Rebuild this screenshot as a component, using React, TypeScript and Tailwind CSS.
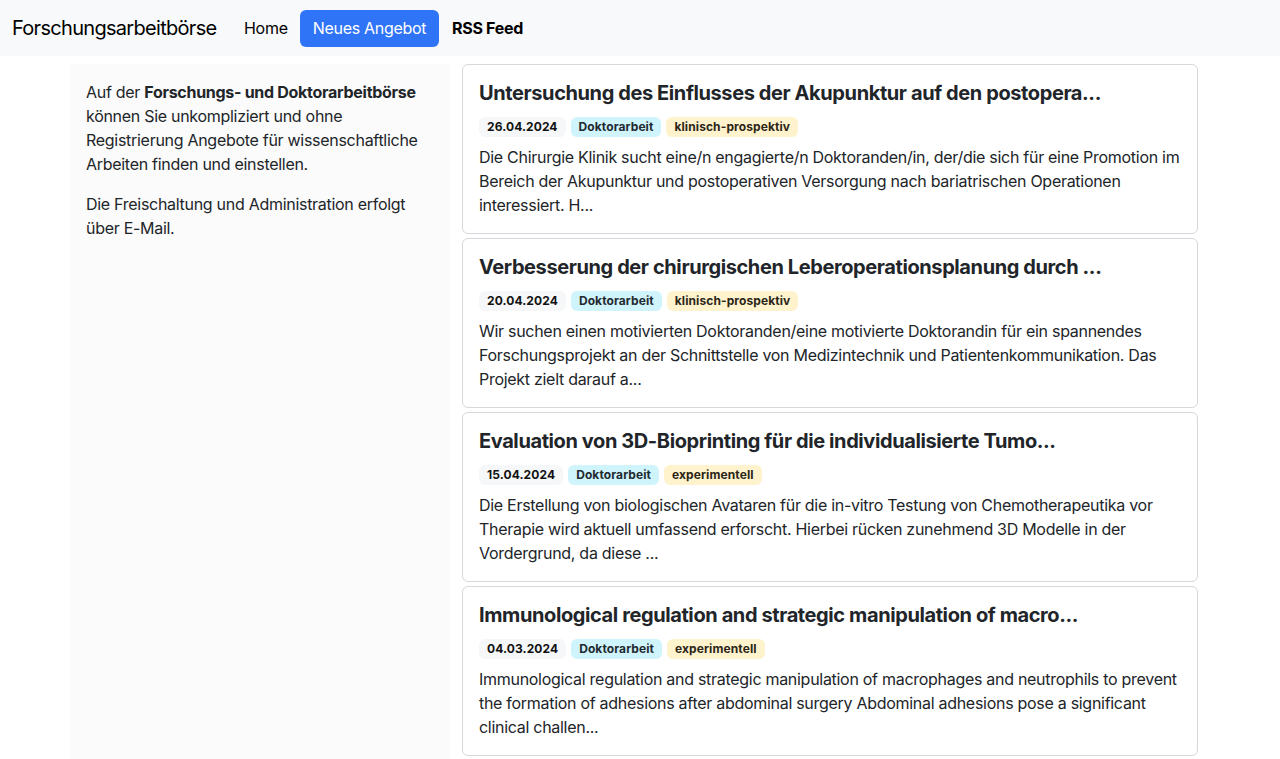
import React from "react";

type Offer = {
  title: string;
  date: string;
  kind: string;
  method: string;
  text: string;
};

const offers: Offer[] = [
  {
    title: "Untersuchung des Einflusses der Akupunktur auf den postopera...",
    date: "26.04.2024",
    kind: "Doktorarbeit",
    method: "klinisch-prospektiv",
    text: "Die Chirurgie Klinik sucht eine/n engagierte/n Doktoranden/in, der/die sich für eine Promotion im Bereich der Akupunktur und postoperativen Versorgung nach bariatrischen Operationen interessiert. H...",
  },
  {
    title: "Verbesserung der chirurgischen Leberoperationsplanung durch ...",
    date: "20.04.2024",
    kind: "Doktorarbeit",
    method: "klinisch-prospektiv",
    text: "Wir suchen einen motivierten Doktoranden/eine motivierte Doktorandin für ein spannendes Forschungsprojekt an der Schnittstelle von Medizintechnik und Patientenkommunikation. Das Projekt zielt darauf a...",
  },
  {
    title: "Evaluation von 3D-Bioprinting für die individualisierte Tumo...",
    date: "15.04.2024",
    kind: "Doktorarbeit",
    method: "experimentell",
    text: "Die Erstellung von biologischen Avataren für die in-vitro Testung von Chemotherapeutika vor Therapie wird aktuell umfassend erforscht. Hierbei rücken zunehmend 3D Modelle in der Vordergrund, da diese ...",
  },
  {
    title: "Immunological regulation and strategic manipulation of macro...",
    date: "04.03.2024",
    kind: "Doktorarbeit",
    method: "experimentell",
    text: "Immunological regulation and strategic manipulation of macrophages and neutrophils to prevent the formation of adhesions after abdominal surgery Abdominal adhesions pose a significant clinical challen...",
  },
];

function Badge({ className, children }: { className: string; children: React.ReactNode }) {
  return (
    <span
      className={
        "inline-block rounded-md px-[8px] py-[4px] text-[12px] font-bold leading-none tracking-[0.008em] " +
        className
      }
    >
      {children}
    </span>
  );
}

function OfferCard({ offer }: { offer: Offer }) {
  return (
    <div className="bg-white border border-[#d6d8db] rounded-md p-4 mb-1">
      <h5 className="text-[20px] leading-[24px] font-bold tracking-[-0.02em] text-[#212529] mb-2">
        {offer.title}
      </h5>
      <div className="flex gap-[5px] mt-[12px] mb-2">
        <Badge className="bg-[#f6f7f8] text-[#111]">{offer.date}</Badge>
        <Badge className="bg-[#cff4fc] text-[#1f2a30]">{offer.kind}</Badge>
        <Badge className="bg-[#fff3cd] text-[#2b2618]">{offer.method}</Badge>
      </div>
      <p className="text-[16px] leading-[24px] text-[#212529]">{offer.text}</p>
    </div>
  );
}

export default function App() {
  return (
    <div
      className="min-h-screen bg-white flex flex-col text-[#212529] tracking-[-0.018em]"
      style={{ fontFamily: "Inter, 'Noto Sans', sans-serif" }}
    >
      <nav className="h-[56px] bg-[#f8f9fa] flex items-center px-3 shrink-0">
        <span className="w-[203px] text-[20px] text-black tracking-[-0.035em] whitespace-nowrap mr-[21px]">
          Forschungsarbeitbörse
        </span>
        <a className="w-[59px] text-[16px] text-black px-2 py-2 mr-[5px]">Home</a>
        <a className="w-[139px] text-[16px] text-white bg-[#2f74f6] rounded-md h-[37px] flex items-center justify-center">
          Neues Angebot
        </a>
        <a className="text-[16px] font-bold text-black ml-[13px]">RSS Feed</a>
      </nav>

      <main className="flex-1 w-[1140px] mx-auto flex pt-2">
        <aside className="w-[380px] bg-[#fbfbfb] px-4 py-4 text-[16px] leading-[24px]">
          <p className="mb-4">
            Auf der <b>Forschungs- und Doktorarbeitbörse</b> können Sie unkompliziert und ohne
            Registrierung Angebote für wissenschaftliche Arbeiten finden und einstellen.
          </p>
          <p>Die Freischaltung und Administration erfolgt über E-Mail.</p>
        </aside>
        <section className="flex-1 px-3">
          {offers.map((o) => (
            <OfferCard key={o.date} offer={o} />
          ))}
        </section>
      </main>
    </div>
  );
}
